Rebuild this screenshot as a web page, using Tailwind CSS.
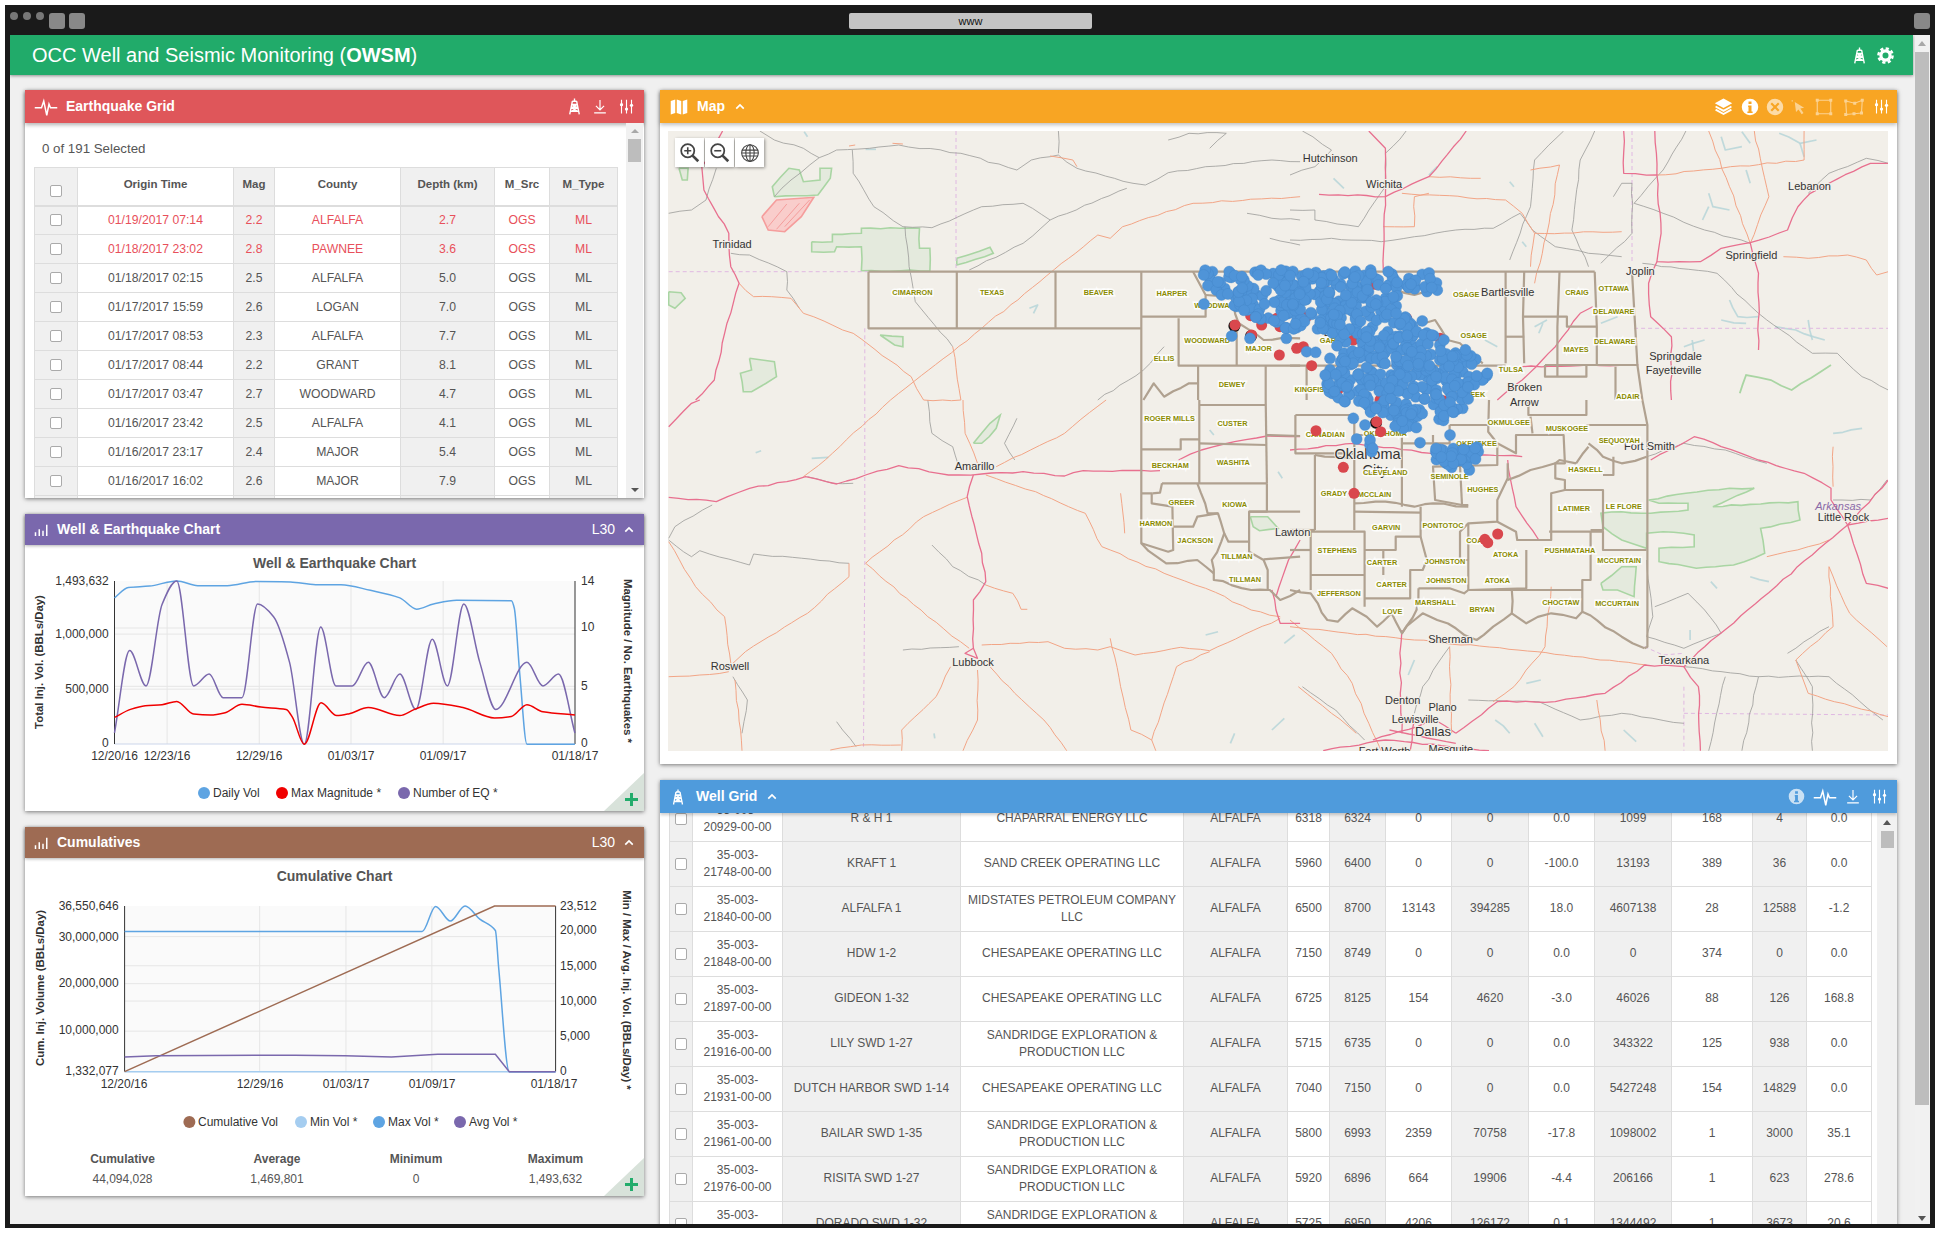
<!DOCTYPE html>
<html lang="en">
<head>
    <meta charset="UTF-8">
    <title>OCC Well and Seismic Monitoring</title>
    <script src="https://cdn.jsdelivr.net/npm/@tailwindcss/browser@4"></script>
</head>
<body class="bg-white overflow-hidden font-['Liberation_Sans',Arial,sans-serif] text-[#555]">

    <!-- icon sprite -->
    <svg class="hidden">
        <symbol id="i-rig" viewBox="0 0 24 32"><path fill="none" stroke="currentColor" stroke-width="2.600" d="M12 1v5M8 6h8M8 6 3 31M16 6l5 25M7 12h10M6 18h12M4 25h16M7 12l10 6M17 12 7 18M6 18l12 7M18 18 6 25"/></symbol>
        <symbol id="i-down" viewBox="0 0 24 24"><path fill="none" stroke="currentColor" stroke-width="2" d="M12 1v16M5 11l7 7 7-7M2 23h20"/></symbol>
        <symbol id="i-sliders" viewBox="0 0 24 24"><path fill="none" stroke="currentColor" stroke-width="1.800" d="M4 1v22M12 1v22M20 1v22"/><circle cx="4" cy="9" r="2.600" fill="currentColor"/><circle cx="12" cy="16" r="2.600" fill="currentColor"/><circle cx="20" cy="10" r="2.600" fill="currentColor"/></symbol>
        <symbol id="i-pulse" viewBox="0 0 32 24"><polyline fill="none" stroke="currentColor" stroke-width="2" points="1,13 10,13 13,4 17,23 20,8 22,13 31,13"/></symbol>
        <symbol id="i-bars" viewBox="0 0 20 16"><path fill="currentColor" d="M1 11h2v5H1zM6 7h2v9H6zM11 9h2v7h-2zM16 1h2v15h-2z"/></symbol>
        <symbol id="i-map" viewBox="0 0 24 24"><path fill="currentColor" d="M1 4l6-2v18l-6 2zM9 2l6 2v18l-6-2zM17 4l6-2v18l-6 2z"/></symbol>
        <symbol id="i-layers" viewBox="0 0 24 24"><path fill="currentColor" d="M12 2l11 6-11 6L1 8z"/><path fill="none" stroke="currentColor" stroke-width="2.400" d="M2 12l10 5.500L22 12M2 16l10 5.500L22 16"/></symbol>
        <symbol id="i-info" viewBox="0 0 24 24"><path fill="currentColor" fill-rule="evenodd" d="M12 1a11 11 0 1 0 0 22a11 11 0 1 0 0-22zM10 4.500h4v3.500h-4zM9.500 10h4.500v8h1.500v2h-7v-2h1.500v-6h-.5z"/></symbol>
        <symbol id="i-x" viewBox="0 0 24 24"><path fill="currentColor" fill-rule="evenodd" d="M12 1a11 11 0 1 0 0 22a11 11 0 1 0 0-22zM8 6l4 4 4-4 2 2-4 4 4 4-2 2-4-4-4 4-2-2 4-4-4-4z"/></symbol>
        <symbol id="i-cursor" viewBox="0 0 24 24"><path fill="currentColor" d="M6 4l15 9-6 1.500 5 7-3 2-5-7.500-4 4z"/><path fill="currentColor" d="M1 1h2v2H1z"/></symbol>
        <symbol id="i-rect" viewBox="0 0 24 24"><path fill="none" stroke="currentColor" stroke-width="1.500" d="M3 3h18v18H3z"/><path fill="currentColor" d="M1 1h4v4H1zM19 1h4v4h-4zM1 19h4v4H1zM19 19h4v4h-4z"/></symbol>
        <symbol id="i-poly" viewBox="0 0 28 24"><path fill="none" stroke="currentColor" stroke-width="1.500" d="M3 4l12 3 10-4-1 17-10 1-10 1z"/><path fill="currentColor" d="M1 2h4v4H1zM13 5h4v4h-4zM23 1h4v4h-4zM22 18h4v4h-4zM12 19h4v4h-4zM1 20h4v4H1z"/></symbol>
        <symbol id="i-gear" viewBox="0 0 24 24"><circle cx="12" cy="12" r="6.500" fill="none" stroke="currentColor" stroke-width="4.500"/><circle cx="12" cy="12" r="10" fill="none" stroke="currentColor" stroke-width="3.500" stroke-dasharray="4.500 3.350"/></symbol>
        <symbol id="i-up" viewBox="0 0 12 8"><path fill="none" stroke="currentColor" stroke-width="2" d="M1.500 6.500 6 2l4.500 4.500"/></symbol>
        <symbol id="i-zoomin" viewBox="0 0 24 24"><circle cx="10" cy="10" r="7.500" fill="none" stroke="currentColor" stroke-width="2"/><path fill="none" stroke="currentColor" stroke-width="3" d="M15.500 15.500 22 22"/><path fill="none" stroke="currentColor" stroke-width="1.800" d="M6 10h8M10 6v8"/></symbol>
        <symbol id="i-zoomout" viewBox="0 0 24 24"><circle cx="10" cy="10" r="7.500" fill="none" stroke="currentColor" stroke-width="2"/><path fill="none" stroke="currentColor" stroke-width="3" d="M15.500 15.500 22 22"/><path fill="none" stroke="currentColor" stroke-width="1.800" d="M6 10h8"/></symbol>
        <symbol id="i-globe" viewBox="0 0 24 24"><g fill="none" stroke="currentColor" stroke-width="1.300"><circle cx="12" cy="12" r="10"/><ellipse cx="12" cy="12" rx="5" ry="10"/><path d="M12 2v20M2.500 8.500h19M2 12h20M2.500 15.500h19"/></g></symbol>
        <symbol id="i-plus" viewBox="0 0 14 14"><path fill="none" stroke="currentColor" stroke-width="3.200" d="M7 0v14M0 7h14"/></symbol>
    </svg>

    <div class="w-[1940px] h-[1234px] pt-[5px] pl-[5px]">
        <div class="w-[1930px] h-[1223px] bg-[#1a1a1a] flex flex-col">

            <!-- browser chrome -->
            <div class="h-[30px] flex items-start pl-[5px] shrink-0">
                <div class="flex gap-[5px] mt-[7px]">
                    <span class="w-[8px] h-[8px] rounded-full bg-[#777]"></span>
                    <span class="w-[8px] h-[8px] rounded-full bg-[#777]"></span>
                    <span class="w-[8px] h-[8px] rounded-full bg-[#777]"></span>
                </div>
                <span class="w-[16px] h-[16px] rounded-[3px] bg-[#888] ml-[5px] mt-[8px]"></span>
                <span class="w-[16px] h-[16px] rounded-[3px] bg-[#888] ml-[4px] mt-[8px]"></span>
                <div class="w-[243px] h-[16px] rounded-[2px] bg-[#c4c4c4] ml-[764px] mt-[8px] text-center text-[#111] text-[11px] leading-[16px]">www</div>
                <span class="w-[16px] h-[16px] rounded-[3px] bg-[#888] ml-[822px] mt-[8px]"></span>
            </div>

            <!-- page -->
            <div class="mx-[5px] h-[1189px] flex bg-[#f0f0f0] overflow-hidden">
                <div class="w-[1905px]">
                    <div class="w-[1903px] h-[40px] bg-[#21ab6a] shadow-[0_1px_3px_rgba(0,0,0,0.4)] flex items-center pl-[22px] pr-[19px] text-white">
                        <h1 class="text-[20px] flex-1">OCC Well and Seismic Monitoring (<b>OWSM</b>)</h1>
                        <svg class="w-[13px] h-[17px] mr-[11px]"><use href="#i-rig"/></svg>
                        <svg class="w-[17px] h-[17px]"><use href="#i-gear"/></svg>
                    </div>

                    <div class="flex gap-[16px] pl-[15px] pt-[15px]">
                        <!-- left column -->
                        <div class="w-[619px] flex flex-col gap-[16px]">
                            <section class="h-[408px] bg-white shadow-[0_1px_4px_rgba(0,0,0,0.5)] flex flex-col">
                                <div class="h-[33px] shrink-0 bg-[#df565a] text-white flex items-center pl-[9px] pr-[10px] shadow-[0_2px_4px_rgba(0,0,0,0.3)] relative">
                                    <svg class="w-[24px] h-[18px] mr-[8px]"><use href="#i-pulse"/></svg>
                                    <span class="font-bold text-[14px] flex-1">Earthquake Grid</span>
                                    <svg class="w-[13px] h-[17px] mr-[12px]"><use href="#i-rig"/></svg>
                                    <svg class="w-[14px] h-[15px] mr-[12px]"><use href="#i-down"/></svg>
                                    <svg class="w-[15px] h-[15px]"><use href="#i-sliders"/></svg>
                                </div>
                                <div class="flex flex-1 overflow-hidden">
                                    <div class="w-[601px] pl-[9px] overflow-hidden">
                                        <div class="h-[44px] pt-[17px] pl-[8px] text-[13.300px] leading-[18px]">0 of 191 Selected</div>
                                        <table class="w-[583px] table-fixed border-collapse text-[12.200px] text-center">
                                            <colgroup><col class="w-[43px]"><col class="w-[156px]"><col class="w-[41px]"><col class="w-[126px]"><col class="w-[94px]"><col class="w-[55px]"><col class="w-[68px]"></colgroup>
                                            <thead>
                                                <tr class="h-[38px] text-[11.500px] [&>th]:border [&>th]:border-[#ddd] [&>th]:border-b-2 [&>th:nth-child(odd)]:bg-[#f0f0f0] [&>th]:pb-[4px]">
                                                    <th><div class="w-[12px] h-[12px] mx-auto mt-[14px] bg-white border border-[#aaa] rounded-[2px]"></div></th>
                                                    <th>Origin Time</th><th>Mag</th><th>County</th><th>Depth (km)</th><th>M_Src</th><th>M_Type</th>
                                                </tr>
                                            </thead>
                                            <tbody id="eq-rows"></tbody>
                                        </table>
                                    </div>
                                    <div class="w-[17px] bg-[#f1f1f1] flex flex-col items-center relative">
                                        <span class="mt-[6px] w-0 h-0 border-x-[4px] border-x-transparent border-b-[4px] border-b-[#a8a8a8]"></span>
                                        <span class="mt-[6px] w-[13px] h-[23px] bg-[#bdbdbd]"></span>
                                        <span class="mt-auto mb-[6px] w-0 h-0 border-x-[4px] border-x-transparent border-t-[4px] border-t-[#555]"></span>
                                    </div>
                                </div>
                            </section>

                            <section class="h-[297px] bg-white shadow-[0_1px_4px_rgba(0,0,0,0.5)] relative">
                                <div class="h-[31px] bg-[#7a68ad] text-white flex items-center pl-[9px] pr-[10px] shadow-[0_1px_3px_rgba(0,0,0,0.3)] relative">
                                    <svg class="w-[15px] h-[12px] mr-[8px]"><use href="#i-bars"/></svg>
                                    <span class="font-bold text-[14px] flex-1">Well &amp; Earthquake Chart</span>
                                    <span class="text-[14px] mr-[9px]">L30</span>
                                    <svg class="w-[10px] h-[7px]"><use href="#i-up"/></svg>
                                </div>
                                <svg id="chart1" viewBox="25 545 619 266" class="w-[619px] h-[266px] block"></svg>
                                <div class="absolute right-0 bottom-0 w-[40px] h-[38px] bg-[#d8e2da] [clip-path:polygon(100%_0,100%_100%,0_100%)]"></div>
                                <svg class="absolute right-[6px] bottom-[5px] w-[13px] h-[13px] text-[#22ac6b]"><use href="#i-plus"/></svg>
                            </section>

                            <section class="h-[369px] bg-white shadow-[0_1px_4px_rgba(0,0,0,0.5)] relative">
                                <div class="h-[31px] bg-[#9e6b53] text-white flex items-center pl-[9px] pr-[10px] shadow-[0_1px_3px_rgba(0,0,0,0.3)] relative">
                                    <svg class="w-[15px] h-[12px] mr-[8px]"><use href="#i-bars"/></svg>
                                    <span class="font-bold text-[14px] flex-1">Cumulatives</span>
                                    <span class="text-[14px] mr-[9px]">L30</span>
                                    <svg class="w-[10px] h-[7px]"><use href="#i-up"/></svg>
                                </div>
                                <svg id="chart2" viewBox="25 860 619 291" class="w-[619px] h-[291px] block"></svg>
                                <div class="grid grid-cols-[195px_114px_164px_115px] text-center text-[12px] leading-[20px]">
                                    <b>Cumulative</b><b>Average</b><b>Minimum</b><b>Maximum</b>
                                    <span>44,094,028</span><span>1,469,801</span><span>0</span><span>1,493,632</span>
                                </div>
                                <div class="absolute right-0 bottom-0 w-[40px] h-[38px] bg-[#d8e2da] [clip-path:polygon(100%_0,100%_100%,0_100%)]"></div>
                                <svg class="absolute right-[6px] bottom-[5px] w-[13px] h-[13px] text-[#22ac6b]"><use href="#i-plus"/></svg>
                            </section>
                        </div>

                        <!-- right column -->
                        <div class="w-[1237px] flex flex-col gap-[16px]">
                            <section class="h-[674px] bg-white shadow-[0_1px_4px_rgba(0,0,0,0.5)]">
                                <div class="h-[33px] bg-[#f8a523] text-white flex items-center pl-[10px] pr-[8px] shadow-[0_2px_4px_rgba(0,0,0,0.25)] relative">
                                    <svg class="w-[18px] h-[18px] mr-[9px]"><use href="#i-map"/></svg>
                                    <span class="font-bold text-[14px] mr-[10px]">Map</span>
                                    <svg class="w-[10px] h-[7px] flex-none"><use href="#i-up"/></svg>
                                    <span class="flex-1"></span>
                                    <svg class="w-[19px] h-[19px] mr-[8px]"><use href="#i-layers"/></svg>
                                    <svg class="w-[18px] h-[18px] mr-[7px]"><use href="#i-info"/></svg>
                                    <svg class="w-[18px] h-[18px] mr-[7px] opacity-60"><use href="#i-x"/></svg>
                                    <svg class="w-[15px] h-[16px] mr-[8px] opacity-50"><use href="#i-cursor"/></svg>
                                    <svg class="w-[20px] h-[18px] mr-[9px] opacity-50"><use href="#i-rect"/></svg>
                                    <svg class="w-[22px] h-[18px] mr-[9px] opacity-50"><use href="#i-poly"/></svg>
                                    <svg class="w-[15px] h-[17px]"><use href="#i-sliders"/></svg>
                                </div>
                                <div class="relative w-[1220px] h-[620px] ml-[8px] mt-[8px] bg-[#f2efe9] overflow-hidden">
                                    <svg id="map" viewBox="668 131 1220 620" class="w-[1220px] h-[620px] block"></svg>
                                    <div class="absolute left-[7px] top-[7px] flex gap-px">
                                        <div class="w-[29px] h-[29px] bg-white shadow-[1px_1px_3px_rgba(0,0,0,0.4)] flex items-center justify-center text-[#444]"><svg class="w-[21px] h-[21px]"><use href="#i-zoomin"/></svg></div>
                                        <div class="w-[29px] h-[29px] bg-white shadow-[1px_1px_3px_rgba(0,0,0,0.4)] flex items-center justify-center text-[#444]"><svg class="w-[21px] h-[21px]"><use href="#i-zoomout"/></svg></div>
                                        <div class="w-[29px] h-[29px] bg-white shadow-[1px_1px_3px_rgba(0,0,0,0.4)] flex items-center justify-center text-[#444]"><svg class="w-[20px] h-[20px]"><use href="#i-globe"/></svg></div>
                                    </div>
                                </div>
                            </section>

                            <section class="h-[448px] bg-white shadow-[0_1px_4px_rgba(0,0,0,0.5)] flex flex-col overflow-hidden">
                                <div class="h-[33px] shrink-0 bg-[#4f9bdc] text-white flex items-center pl-[12px] pr-[10px] shadow-[0_2px_3px_rgba(0,0,0,0.2)] relative z-10">
                                    <svg class="w-[12px] h-[18px] mr-[12px]"><use href="#i-rig"/></svg>
                                    <span class="font-bold text-[14px] mr-[10px]">Well Grid</span>
                                    <svg class="w-[10px] h-[7px]"><use href="#i-up"/></svg>
                                    <span class="flex-1"></span>
                                    <svg class="w-[17px] h-[17px] mr-[8px] opacity-70"><use href="#i-info"/></svg>
                                    <svg class="w-[24px] h-[18px] mr-[9px]"><use href="#i-pulse"/></svg>
                                    <svg class="w-[14px] h-[15px] mr-[12px]"><use href="#i-down"/></svg>
                                    <svg class="w-[15px] h-[15px]"><use href="#i-sliders"/></svg>
                                </div>
                                <div class="flex flex-1 overflow-hidden">
                                    <div class="w-[1217px] pl-[9px] overflow-hidden">
                                        <table class="w-[1202px] -mt-[17.500px] table-fixed border-collapse text-[12px] leading-[17px] text-center">
                                            <colgroup><col class="w-[23px]"><col class="w-[90px]"><col class="w-[178px]"><col class="w-[223px]"><col class="w-[104px]"><col class="w-[42px]"><col class="w-[56px]"><col class="w-[66px]"><col class="w-[77px]"><col class="w-[66px]"><col class="w-[77px]"><col class="w-[81px]"><col class="w-[54px]"><col class="w-[65px]"></colgroup>
                                            <tbody id="well-rows"></tbody>
                                        </table>
                                    </div>
                                    <div class="w-[20px] bg-[#f1f1f1] flex flex-col items-center">
                                        <span class="mt-[7px] w-0 h-0 border-x-[4px] border-x-transparent border-b-[5px] border-b-[#555]"></span>
                                        <span class="mt-[6px] w-[13px] h-[17px] bg-[#bdbdbd]"></span>
                                    </div>
                                </div>
                            </section>
                        </div>
                    </div>
                </div>

                <!-- page scrollbar -->
                <div class="w-[15px] bg-[#f1f1f1] flex flex-col items-start">
                    <span class="mt-[6px] ml-[3px] w-0 h-0 border-x-[4px] border-x-transparent border-b-[5px] border-b-[#a8a8a8]"></span>
                    <span class="mt-[6px] w-[14px] h-[1053px] bg-[#bdbdbd]"></span>
                    <span class="mt-auto mb-[3px] ml-[3px] w-0 h-0 border-x-[4px] border-x-transparent border-t-[5px] border-t-[#555]"></span>
                </div>
            </div>
        </div>
    </div>

    <script>
        // --- grids ---
        const box = '<div class="w-[12px] h-[12px] mx-auto bg-white border border-[#aaa] rounded-[2px]"></div>';

        const eq = [
            ['01/19/2017 07:14','2.2','ALFALFA','2.7',1],
            ['01/18/2017 23:02','2.8','PAWNEE','3.6',1],
            ['01/18/2017 02:15','2.5','ALFALFA','5.0'],
            ['01/17/2017 15:59','2.6','LOGAN','7.0'],
            ['01/17/2017 08:53','2.3','ALFALFA','7.7'],
            ['01/17/2017 08:44','2.2','GRANT','8.1'],
            ['01/17/2017 03:47','2.7','WOODWARD','4.7'],
            ['01/16/2017 23:42','2.5','ALFALFA','4.1'],
            ['01/16/2017 23:17','2.4','MAJOR','5.4'],
            ['01/16/2017 16:02','2.6','MAJOR','7.9'],
            ['','','','']
        ];
        document.getElementById('eq-rows').innerHTML = eq.map(r =>
            `<tr class="h-[29px] [&>td]:border [&>td]:border-[#ddd] [&>td:nth-child(odd)]:bg-[#f0f0f0] ${r[4] ? 'text-[#e8505b]' : ''}">
                <td>${r[0] ? box : ''}</td><td>${r[0]}</td><td>${r[1]}</td><td>${r[2]}</td><td>${r[3]}</td><td>${r[0] ? 'OGS' : ''}</td><td>${r[0] ? 'ML' : ''}</td></tr>`
        ).join('');

        const CHK = 'CHESAPEAKE OPERATING LLC', SND = 'SANDRIDGE EXPLORATION &amp; PRODUCTION LLC';
        const wells = [
            ['20929','R &amp; H 1','CHAPARRAL ENERGY LLC',6318,6324,0,0,'0.0',1099,168,4,'0.0'],
            ['21748','KRAFT 1','SAND CREEK OPERATING LLC',5960,6400,0,0,'-100.0',13193,389,36,'0.0'],
            ['21840','ALFALFA 1','MIDSTATES PETROLEUM COMPANY LLC',6500,8700,13143,394285,'18.0',4607138,28,12588,'-1.2'],
            ['21848','HDW 1-2',CHK,7150,8749,0,0,'0.0',0,374,0,'0.0'],
            ['21897','GIDEON 1-32',CHK,6725,8125,154,4620,'-3.0',46026,88,126,'168.8'],
            ['21916','LILY SWD 1-27',SND,5715,6735,0,0,'0.0',343322,125,938,'0.0'],
            ['21931','DUTCH HARBOR SWD 1-14',CHK,7040,7150,0,0,'0.0',5427248,154,14829,'0.0'],
            ['21961','BAILAR SWD 1-35',SND,5800,6993,2359,70758,'-17.8',1098002,1,3000,'35.1'],
            ['21976','RISITA SWD 1-27',SND,5920,6896,664,19906,'-4.4',206166,1,623,'278.6'],
            ['21983','DORADO SWD 1-32',SND,5725,6950,4206,126172,'0.1',1344492,1,3673,'20.6']
        ];
        document.getElementById('well-rows').innerHTML = wells.map(r =>
            `<tr class="h-[45px] [&>td]:border [&>td]:border-[#ddd] [&>td:nth-child(odd)]:bg-[#f0f0f0]">
                <td>${box}</td><td>35-003-<br>${r[0]}-00-00</td><td>${r[1]}</td><td class="px-[4px]">${r[2]}</td><td>ALFALFA</td>
                ${r.slice(3).map(v => `<td>${v}</td>`).join('')}</tr>`
        ).join('');

        // --- charts (points are read off the picture, sx/sy bring them to page pixels) ---
        const sx = x => x / 2.376, sy = y => 500 + y / 2.125;
        const pts = s => s.trim().split(/\s+/).map(p => p.split(',').map(Number));
        // monotone spline, so flat runs stay flat next to a steep drop
        const spline = s => {
            const p = pts(s).map(([x, y]) => [sx(x), sy(y)]);
            const slope = i => (p[i + 1][1] - p[i][1]) / (p[i + 1][0] - p[i][0]);
            const m = p.map((_, i) => {
                if (i === 0) return slope(0);
                if (i === p.length - 1) return slope(i - 1);
                const a = slope(i - 1), b = slope(i);
                return a * b <= 0 ? 0 : 2 * a * b / (a + b);
            });
            let d = `M${p[0]}`;
            for (let i = 0; i < p.length - 1; i++) {
                const h = (p[i + 1][0] - p[i][0]) / 3;
                d += `C${p[i][0] + h},${p[i][1] + m[i] * h} ${p[i + 1][0] - h},${p[i + 1][1] - m[i + 1] * h} ${p[i + 1][0]},${p[i + 1][1]}`;
            }
            return d;
        };
        const line = (d, c, w = 1.500) => `<path d="${d}" fill="none" stroke="${c}" stroke-width="${w}"/>`;
        const text = (x, y, s, anchor = 'middle', size = 12, extra = '') =>
            `<text x="${x}" y="${y + size * 0.36}" text-anchor="${anchor}" font-size="${size}" fill="#333" ${extra}>${s}</text>`;
        const rotated = (x, y, s, ang, size) =>
            `<text transform="translate(${x},${y}) rotate(${ang})" text-anchor="middle" dominant-baseline="middle" font-size="${size}" font-weight="bold" fill="#333">${s}</text>`;
        const dot = (x, y, c) => `<circle cx="${x}" cy="${y}" r="6" fill="${c}"/>`;

        function frame(l, r, t, b, hs, vs) {
            let o = `<rect x="${l}" y="${t}" width="${r - l}" height="${b - t}" fill="#fafafa"/>`;
            hs.forEach(y => o += line(`M${l} ${sy(y)}H${r}`, '#e6e6e6', 1));
            vs.forEach(x => o += line(`M${sx(x)} ${t}V${b}`, '#e6e6e6', 1));
            o += line(`M${l} ${b}H${r}`, '#ccd6eb', 1);
            o += line(`M${l} ${t}V${b}`, '#333', 1) + line(`M${r} ${t}V${b}`, '#333', 1);
            return o;
        }

        // Well & Earthquake
        {
            const l = 114.500, r = 575, t = 581, b = 744;
            let o = frame(l, r, t, b, [272, 285, 396, 402], [397, 616, 834, 1053]);
            o += text(334.600, 563, 'Well &amp; Earthquake Chart', 'middle', 14, 'font-weight="bold" style="fill:#555"');
            [['1,493,632', 581], ['1,000,000', 634], ['500,000', 689], ['0', 743]].forEach(a => o += text(108.600, a[1], a[0], 'end'));
            [['14', 581], ['10', 627], ['5', 685.400], ['0', 743]].forEach(a => o += text(581, a[1], a[0], 'start'));
            [['12/20/16', 114.500], ['12/23/16', 167], ['12/29/16', 259], ['01/03/17', 351], ['01/09/17', 443], ['01/18/17', 575]].forEach(a => o += text(a[1], 756, a[0]));
            o += rotated(40, 662, 'Total Inj. Vol. (BBLs/Day)', -90, 11.400);
            o += rotated(627, 661, 'Magnitude / No. Earthquakes *', 90, 11.400);
            o += line(spline('272,208 305,186 355,183 420,172 470,182 540,182 610,173 690,174 750,180 810,180 880,192 950,208 990,232 1030,221 1085,213 1215,214 1222,230 1235,370 1252,519 1366,519'), '#5ea4e2');
            o += line(spline('272,495 308,320 347,395 385,222 420,172 460,395 497,370 530,420 575,420 612,221 650,248 688,345 723,519 762,270 798,395 837,395 875,345 913,420 950,370 988,445 1027,296 1063,395 1102,221 1140,345 1178,445 1252,345 1290,395 1327,370 1366,495'), '#7a68ad');
            o += line(spline('272,462 310,445 345,437 385,435 420,428 460,455 500,457 535,452 575,434 620,440 680,445 695,462 723,519 763,431 800,458 830,454 875,441 950,458 985,445 1030,432 1100,441 1175,463 1215,460 1252,435 1290,450 1366,457'), '#f00000');
            o += dot(204, 793, '#5ea4e2') + text(213, 793, 'Daily Vol', 'start');
            o += dot(282, 793, '#f00000') + text(291, 793, 'Max Magnitude *', 'start');
            o += dot(404, 793, '#7a68ad') + text(413, 793, 'Number of EQ *', 'start');
            document.getElementById('chart1').innerHTML = o;
        }

        // Cumulatives
        {
            const l = 124.600, r = 555.600, t = 908, b = 1073.600;
            let o = frame(l, r, t, b, [932, 994, 1032, 1069, 1133], [617, 822, 1026]);
            o += text(334.600, 878, 'Cumulative Chart', 'middle', 14, 'font-weight="bold" style="fill:#555"');
            [['36,550,646', 908], ['30,000,000', 938.600], ['20,000,000', 984.700], ['10,000,000', 1032], ['1,332,077', 1073]].forEach(a => o += text(118.700, a[1], a[0], 'end'));
            [['23,512', 908], ['20,000', 931.500], ['15,000', 967.800], ['10,000', 1003], ['5,000', 1038], ['0', 1073]].forEach(a => o += text(560, a[1], a[0], 'start'));
            [['12/20/16', 124], ['12/29/16', 260], ['01/03/17', 346], ['01/09/17', 432], ['01/18/17', 554]].forEach(a => o += text(a[1], 1086, a[0]));
            o += rotated(41, 990, 'Cum. Inj. Volume (BBLs/Day)', -90, 11.400);
            o += rotated(626, 992, 'Min / Max / Avg. Inj. Vol. (BBLs/Day) *', 90, 11.400);
            const straight = s => 'M' + pts(s).map(([x, y]) => `${sx(x)} ${sy(y)}`).join('L');
            o += line(straight('296,1219 1320,1219'), '#a5cdf0');
            o += line(spline('296,921 1003,921 1035,868 1070,899 1105,867 1140,895 1177,919 1185,1000 1210,1219 1320,1219'), '#5ea4e2');
            o += line(straight('296,1219 1175,867 1320,867'), '#9e6b53');
            o += line(straight('296,1188 370,1185 700,1184 820,1185 930,1188 1040,1182 1177,1182 1210,1219 1320,1219'), '#7a68ad');
            o += dot(189.400, 1124, '#9e6b53') + text(198, 1124, 'Cumulative Vol', 'start');
            o += dot(301, 1124, '#a5cdf0') + text(310, 1124, 'Min Vol *', 'start');
            o += dot(379, 1124, '#5ea4e2') + text(388, 1124, 'Max Vol *', 'start');
            o += dot(460, 1124, '#7a68ad') + text(469, 1124, 'Avg Vol *', 'start');
            document.getElementById('chart2').innerHTML = o;
        }

        // --- map (each stroke is traced in one of four picture quadrants) ---
        const Q = { A: [650, 0], B: [1290, 0], C: [650, 400], D: [1290, 400] };
        const P = (q, x, y) => [Q[q][0] + x / 2.412, Q[q][1] + y / 3];
        const PINK = '#e8708f', ORG = '#f2a586', GRAY = '#9a9a98', COUNTY = '#b0a190', PARK = '#a9d5a3', LAKE = '#b6d5d8';

        let seed = 20170119;
        const rnd = () => (seed = (seed * 1664525 + 1013904223) % 4294967296) / 4294967296;

        // roads and rivers are not straight: break each leg up and nudge the pieces
        const pl = (q, s, amp = 0, step = 9) => {
            const p = pts(s).map(([x, y]) => P(q, x, y));
            const out = [];
            p.forEach((a, i) => {
                out.push(a);
                const b = p[i + 1];
                if (!b || !amp) return;
                const n = Math.floor(Math.hypot(b[0] - a[0], b[1] - a[1]) / step);
                for (let k = 1; k < n; k++) {
                    out.push([a[0] + (b[0] - a[0]) * k / n + (rnd() - .5) * amp * 2, a[1] + (b[1] - a[1]) * k / n + (rnd() - .5) * amp * 2]);
                }
            });
            return out.map(a => a.map(v => v.toFixed(1)).join(',')).join(' ');
        };

        const parks = [
            ['A', '300,590 295,560 335,505 360,510 370,545 410,540 410,505 438,505 435,535 405,585'],
            ['A', '390,725 440,725 440,703 510,700 510,685 650,685 650,745 675,745 675,812 510,812 510,740 450,740 445,755 390,755'],
            ['A', '740,775 820,742 828,760 740,795'],
            ['A', '70,505 92,505 90,540 78,540'],
            ['A', '45,875 75,878 85,895 60,925 45,915'],
            ['A', '555,1005 610,1010 610,1040 590,1035'],
            ['A', '240,1075 270,1080 300,1085 305,1130 280,1150 245,1175 225,1175 218,1120 245,1110'],
            ['C', '780,130 820,70 845,45 835,85 800,130'],
            ['C', '1448,350 1490,350 1515,385 1470,392 1455,380'],
            ['D', '865,300 955,280 1060,265 1120,265 1020,320 1225,305 1230,360 1135,385 1145,460 1070,495 980,505 890,485 890,445 975,440 975,405 900,395 860,400 860,445 800,420 755,380 750,340 800,335 870,340 960,330 960,310 890,310'],
            ['D', '750,550 800,500 835,500 830,590 790,570 755,570']
        ];
        const lakes = [
            ['A', '915,925 935,915 925,940'], ['A', '520,448 545,448'], ['A', '372,395 380,410'],
            ['B', '105,535 130,565'], ['B', '335,525 355,500'], ['B', '560,725 570,740'], ['B', '530,545 540,560'],
            ['B', '1010,580 1020,620 1060,630'], ['B', '1010,620 995,660'], ['B', '1040,410 1050,450 1090,440'], ['B', '1090,395 1110,430'],
            ['B', '1180,400 1230,430 1270,420'], ['B', '1230,430 1240,470'], ['B', '1100,510 1110,550'],
            ['B', '1060,900 1080,950 1130,950'], ['B', '1040,960 1100,970'], ['B', '1170,980 1220,990 1290,1020'], ['B', '1250,960 1260,1020'], ['B', '950,1040 1000,1020'], ['B', '970,1020 975,1070'],
            ['B', '590,980 620,960'], ['B', '600,1000 610,970'], ['B', '750,970 790,950'], ['B', '470,1020 500,1040'],
            ['C', '1340,705 1370,695'], ['C', '1530,730 1555,705'], ['C', '1400,1030 1410,1000'], ['C', '1500,990 1530,955'], ['C', '685,1000 687,1015'], ['C', '255,158 268,152'], ['C', '390,175 430,172'], ['C', '1350,90 1360,105'], ['C', '1515,215 1525,235'],
            ['D', '1030,410 1080,425 1130,405'], ['D', '1310,100 1380,85'], ['D', '570,850 605,840'], ['D', '965,690 965,720'], ['D', '495,960 530,1000'], ['D', '590,970 610,1010'], ['D', '285,825 300,780'], ['D', '805,990 835,1025'], ['D', '1015,545 1030,565'], ['D', '1110,530 1155,545']
        ];
        const roads = [
            // gray: minor roads and rail
            [GRAY, .8, 'A', '265,393 300,420 370,445 408,473 450,450 530,445 600,435 750,460 885,510 920,480 985,465 1030,505 1165,550 1195,555 1250,518 1340,500 1500,480 1568,485'],
            [GRAY, .8, 'A', '408,473 340,540 300,590'],
            [GRAY, .8, 'A', '488,450 490,520 540,620 610,680 680,683 800,620 900,610 965,660 1150,565'],
            [GRAY, .8, 'A', '965,660 900,730 770,810'],
            [GRAY, .8, 'A', '615,680 625,800 640,905 730,1040'],
            [GRAY, .8, 'A', '985,393 985,460'],
            [GRAY, .8, 'A', '45,640 100,630 135,600 160,505'],
            [GRAY, .8, 'A', '195,760 240,765 330,815 330,870 360,925'],
            [GRAY, .8, 'A', '1250,420 1300,400 1390,400 1350,445'],
            [GRAY, .8, 'A', '1440,640 1500,655 1568,660'],
            [GRAY, .8, 'A', '1495,715 1568,735'],
            [GRAY, .8, 'A', '1080,1200 1190,1110 1240,1040'],
            [GRAY, .8, 'B', '30,393 100,450 60,500 0,525'],
            [GRAY, .8, 'B', '280,393 230,460 230,560 165,680 60,660 60,630 0,630'],
            [GRAY, .8, 'B', '0,720 100,715 220,725 300,710 400,690 490,685 555,640 585,690 640,740 720,760 800,770'],
            [GRAY, .8, 'B', '660,393 590,480 580,620 530,780'],
            [GRAY, .8, 'B', '735,393 700,480 680,690 720,800'],
            [GRAY, .8, 'B', '955,393 900,510 830,610 900,640 1000,690 1110,730'],
            [GRAY, .8, 'B', '780,590 800,550 825,550 825,700 750,790'],
            [GRAY, .8, 'B', '850,790 1030,820 1130,940 1260,1060 1320,1060 1380,1130 1443,1170'],
            [GRAY, .8, 'B', '1250,580 1300,520 1390,475 1443,490'],
            [GRAY, .8, 'C', '45,420 100,470 120,452 240,495 250,462 480,490'],
            [GRAY, .8, 'C', '45,415 60,380 150,315'],
            [GRAY, .8, 'C', '670,0 680,100 730,140 745,200'],
            [GRAY, .8, 'C', '885,55 855,130 880,180'],
            [GRAY, .8, 'C', '680,435 730,500 810,555'],
            [GRAY, .8, 'C', '745,740 610,750'],
            [GRAY, .8, 'C', '200,830 235,900 222,1000'],
            [GRAY, .8, 'C', '450,965 497,1040'],
            [GRAY, .8, 'C', '380,230 440,250 490,250'],
            [GRAY, .8, 'D', '860,480 875,650 860,710 950,745 1040,700 1000,630 960,580 880,620'],
            [GRAY, .8, 'D', '950,800 1130,830 1300,830 1430,960'],
            [GRAY, .8, 'D', '1130,830 1090,1052'],
            [GRAY, .8, 'D', '1050,830 1010,1052'],
            [GRAY, .8, 'D', '1220,780 1260,860 1260,1052'],
            [GRAY, .8, 'D', '1300,680 1200,760'],
            [GRAY, .8, 'D', '30,860 110,930 180,1020'],
            [GRAY, .8, 'D', '385,740 320,860 300,940'],
            [GRAY, .8, 'D', '430,900 600,905 700,960 800,940 950,970'],
            [GRAY, .8, 'D', '860,170 950,130 1050,150 1150,190'],
            [GRAY, .8, 'D', '1310,300 1400,300 1440,240'],
            // orange: primary roads
            [ORG, 1, 'A', '215,850 250,890 340,895 370,940 490,1000 630,1130 660,1200 750,1200 730,1040'],
            [ORG, 1, 'A', '1568,590 1310,610 1140,680 1110,715 1080,705 1010,775 800,985 580,1200'],
            [ORG, 1, 'A', '480,438 495,435'], [ORG, 1, 'A', '585,430 610,432'], [ORG, 1, 'A', '965,468 1020,480 1030,500'],
            [ORG, 1, 'B', '335,530 460,535'], [ORG, 1, 'B', '335,580 300,590 300,680 225,680'],
            [ORG, 1, 'B', '270,580 520,600 560,640 590,700 800,695'], [ORG, 1, 'B', '885,525 1040,505 1240,480 1240,390'],
            [ORG, 1, 'B', '1010,393 1060,560 1110,730'], [ORG, 1, 'B', '1120,393 1155,590 1110,730'],
            [ORG, 1, 'B', '1190,770 1250,775 1345,765 1390,780 1415,825 1443,815'], [ORG, 1, 'B', '590,700 580,800'],
            [ORG, 1, 'B', '580,510 650,495 620,700 590,850'],
            [ORG, 1, 'C', '520,490 660,350 765,292'], [ORG, 1, 'C', '520,490 670,650 770,745'],
            [ORG, 1, 'C', '480,490 480,530 380,640 230,755 200,790'], [ORG, 1, 'C', '45,425 110,560 180,650 195,790'],
            [ORG, 1, 'C', '45,830 120,825 190,815'], [ORG, 1, 'C', '205,840 222,1052'],
            [ORG, 1, 'C', '810,225 930,275 1050,340 1090,440 1240,520 1340,565 1450,630 1520,650'],
            [ORG, 1, 'C', '810,555 875,580 895,628 910,628'],
            [ORG, 1, 'C', '800,735 960,725 1000,745 1080,750 1110,740 1170,765 1280,742 1350,752 1520,655'],
            [ORG, 1, 'C', '1110,715 1135,860 1160,990 1210,1020 1270,800 1350,755'], [ORG, 1, 'C', '1210,1020 1220,1052'],
            [ORG, 1, 'C', '725,800 690,890 607,990 607,1052'], [ORG, 1, 'C', '790,810 790,960 755,1052'],
            [ORG, 1, 'C', '820,800 880,880 950,960 1005,1052'], [ORG, 1, 'C', '435,1050 510,1035 605,1035'],
            [ORG, 1, 'C', '1135,280 1145,400'], [ORG, 1, 'C', '835,200 1000,100 1100,0'], [ORG, 1, 'C', '755,0 760,100 790,190'],
            [ORG, 1, 'C', '580,0 440,160 370,230'],
            [ORG, 1, 'D', '0,660 100,760 150,850 190,970 220,1052'], [ORG, 1, 'D', '0,680 300,720 550,750 860,795'],
            [ORG, 1, 'D', '630,560 615,740 540,860 490,905'], [ORG, 1, 'D', '385,740 390,1000'], [ORG, 1, 'D', '1310,140 1310,260'],
            [ORG, 1, 'D', '1440,740 1350,640 1300,500 1310,680 1220,780 1250,880 1443,950'],
            [ORG, 1, 'D', '1150,470 1250,440 1300,420'], [ORG, 1, 'D', '740,900 760,1052'], [ORG, 1, 'D', '20,860 100,940 160,1000'],
            // pink: motorways
            [PINK, 1.300, 'A', '175,393 125,500 130,570 190,700 195,800 215,850 180,1000 155,1140 110,1200'],
            [PINK, 1.300, 'B', '190,393 230,445 230,590 225,810'],
            [PINK, 1.300, 'B', '425,393 335,530 230,590 70,583'],
            [PINK, 1.300, 'B', '805,393 805,520 885,525 895,700 885,785 990,785 1040,745 1110,728 1200,690 1225,620 1255,580 1300,550 1400,490 1443,490'],
            [PINK, 1.300, 'B', '880,393 885,525'], [PINK, 1.300, 'B', '1110,728 1130,820 1130,1050'],
            [PINK, 1.300, 'B', '885,785 865,850 870,950 920,1010 920,1200'],
            [PINK, 1.300, 'B', '500,1200 560,1140 640,1040 700,940 730,920'],
            [PINK, 1.300, 'B', '560,1100 840,1095'],
            [PINK, 1.300, 'C', '45,80 100,10 120,0'],
            [PINK, 1.300, 'C', '45,292 160,305 240,265 330,245 375,230 450,252 520,225 600,197 720,225 800,222 900,215 1000,228 1045,212 1230,212'],
            [PINK, 1.300, 'C', '780,225 765,290 800,460 810,545 780,600 780,745 760,760 790,775 780,745'],
            [PINK, 1.300, 'C', '1275,180 1330,150 1410,125 1488,108 1568,110'],
            [PINK, 1.300, 'C', '1500,570 1510,630 1520,670 1568,670'],
            [PINK, 1.300, 'C', '1510,590 1540,480 1568,420'],
            [PINK, 1.300, 'D', '870,180 975,110 1040,140 1130,180 1240,220 1305,265 1305,300 1345,375 1000,740 950,800 855,795 760,880 640,905 500,905 400,1000'],
            [PINK, 1.300, 'D', '1345,375 1443,240'], [PINK, 1.300, 'D', '1345,375 1443,355'], [PINK, 1.300, 'D', '1345,375 1390,550 1443,565'],
            [PINK, 1.300, 'D', '950,800 985,860 990,1052'], [PINK, 1.300, 'D', '270,1000 265,760 270,690'],
            [PINK, 1.300, 'D', '525,180 545,320 600,420'], [PINK, 1.300, 'D', '0,150 155,130 340,160 560,170'],
            [PINK, 1.300, 'D', '200,1020 350,960 400,1000'], [PINK, 1.300, 'D', '80,1052 230,1020 480,1052'], [PINK, 1.300, 'D', '300,960 290,1052'], [PINK, 1.300, 'D', '240,990 400,1030']
        ];
        // third item: how much the line wanders (the Red River along the south, mostly)
        const counties = [
            ['A', '527,815 1568,815'], ['A', '527,815 527,985 1185,985'], ['A', '740,815 740,985'], ['A', '978,815 978,985'],
            ['A', '1185,815 1185,1200'], ['A', '1310,815 1340,885 1340,950 1185,950'], ['A', '1275,955 1275,1097 1568,1097'],
            ['A', '1415,960 1415,1097'], ['A', '1322,1097 1322,1200'], ['A', '1485,1097 1485,1200'], ['A', '1340,885 1400,885 1420,970 1480,1020 1568,1015', 1],
            ['A', '1190,1200 1215,1150 1240,1190 1300,1150 1322,1150', 1],
            ['C', '1185,0 1185,430 1250,455 1262,450 1260,320 1210,310 1210,280 1185,280'],
            ['C', '1185,148 1280,148 1280,118 1325,118'], ['C', '1325,0 1325,250'], ['C', '1325,15 1485,15'], ['C', '1485,0 1488,250'],
            ['C', '1325,130 1488,135'], ['C', '1235,250 1488,250'], ['C', '1235,250 1230,278 1212,280'], ['C', '1488,105 1568,108'],
            ['C', '1488,250 1488,335 1445,335 1445,455 1480,480 1490,510 1490,570'],
            ['C', '1320,250 1345,340 1370,340 1385,400 1355,480 1360,540 1450,570 1495,570 1520,600 1568,570', 1.300],
            ['C', '1185,430 1245,490 1320,480 1360,520', 1.300], ['C', '1262,380 1310,380 1320,350 1370,340'],
            ['C', '1385,400 1395,425 1445,425'], ['C', '1445,335 1568,335'], ['C', '1480,478 1568,470'],
            ['B', '0,815 735,815'], ['B', '200,815 200,850 300,885 345,870', 1], ['B', '520,815 520,1090'], ['B', '565,815 562,950 565,1090'], ['B', '650,815 645,980 645,1130'],
            ['B', '735,815 740,980 740,1095'], ['B', '825,815 838,1095 850,1200'], ['B', '562,950 668,950 668,980 740,980'],
            ['B', '520,1010 565,1010'], ['B', '40,1097 40,1200'], ['B', '615,1095 838,1095'], ['B', '0,1097 520,1097'],
            ['B', '615,1095 615,1130 715,1130 715,1095'], ['B', '785,1100 785,1200'], ['B', '310,975 350,960 380,1020 410,1030 450,1075 465,1090', 1],
            ['D', '480,0 478,95 500,130 545,160 545,105 660,105 663,190 640,190 640,235 663,240 663,270 755,270 755,390 725,390'],
            ['D', '575,0 575,45 715,45 715,0'], ['D', '715,75 860,75'], ['D', '850,0 862,75 862,740 855,745'], ['D', '580,50 585,100'],
            ['D', '720,130 755,170 800,190 860,170', 1.300], ['D', '640,190 650,180 690,190 720,140', 1.300], ['D', '755,225 780,225 780,170'],
            ['D', '13,45 155,45 155,160 13,160 13,45'], ['D', '155,105 270,105'], ['D', '270,105 270,130 345,130 345,105'], ['D', '385,75 480,75'], ['D', '385,75 385,130 345,130'],
            ['D', '500,130 500,195 345,200 350,300 415,315 430,315'], ['D', '60,165 60,390'], ['D', '155,160 155,390'], ['D', '270,130 270,320'], ['D', '410,195 415,320'],
            ['D', '525,190 525,235 500,300 500,365 430,370 410,395 410,480 430,480'], ['D', '525,240 580,210 640,190', 1],
            ['D', '500,365 545,395 548,420 630,420 630,280 663,270'], ['D', '625,395 755,395 755,450 860,450'], ['D', '570,450 570,565 430,570'],
            ['D', '725,395 725,540 705,540 705,635'], ['D', '430,370 430,570'], ['D', '50,395 180,395 180,620'], ['D', '50,395 50,570'], ['D', '50,525 180,525'],
            ['D', '180,450 255,450 255,410 315,410 315,320'], ['D', '315,410 330,480 320,510 290,510 290,595 180,595'], ['D', '430,570 705,570'],
            ['D', '535,570 535,640 570,670 630,640 690,655 705,635 800,710 855,745', 1.500], ['D', '310,565 385,565 420,580 430,570'], ['D', '310,565 305,630 270,700', 1],
            ['D', '0,570 50,580 90,660 115,665 150,625 185,650 210,680 245,640 270,700 300,660 320,640 355,660 400,685 450,720 490,680 535,640', 1.500],
            ['D', '155,335 315,338'], ['D', '225,450 225,525'], ['D', '60,390 0,390'], ['D', '155,310 230,305 300,320 345,310 430,320', 1], ['D', '0,450 50,450'], ['D', '60,165 155,175', 1]
        ];
        const names = {
            A: [['CIMARRON',633,877],['TEXAS',825,877],['BEAVER',1082,877],['HARPER',1259,880],['WOODWARD',1368,917],['WOODWARD',1344,1021],['ELLIS',1240,1075],['MAJOR',1468,1045],['DEWEY',1404,1153]],
            B: [['OSAGE',425,882],['CRAIG',692,878],['OTTAWA',781,866],['DELAWARE',781,933],['OSAGE',443,1005],['DELAWARE',783,1023],['MAYES',690,1048],['TULSA',533,1108],['ADAIR',815,1188],['GARFIELD',117,1021],['KINGFISHER',65,1168],['CREEK',440,1182]],
            C: [['ROGER MILLS',1253,55],['CUSTER',1405,70],['BECKHAM',1255,195],['WASHITA',1407,188],['GREER',1282,306],['KIOWA',1410,313],['HARMON',1220,370],['JACKSON',1315,421],['TILLMAN',1415,469],['TILLMAN',1435,537]],
            D: [['OKMULGEE',528,68],['MUSKOGEE',668,85],['SEQUOYAH',794,120],['CANADIAN',85,103],['OKLAHOMA',230,100],['OKFUSKEE',450,129],['CLEVELAND',230,216],['SEMINOLE',385,229],['HASKELL',713,209],['HUGHES',465,268],['GRADY',106,279],['MCCLAIN',204,282],['LATIMER',685,326],['LE FLORE',805,318],['GARVIN',232,383],['PONTOTOC',369,375],['COAL',450,422],['STEPHENS',114,452],['ATOKA',520,463],['PUSHMATAHA',675,452],['MCCURTAIN',794,481],['CARTER',222,488],['JOHNSTON',374,483],['ATOKA',500,540],['JOHNSTON',377,541],['CARTER',245,553],['JEFFERSON',118,580],['MARSHALL',351,608],['CHOCTAW',653,608],['MCCURTAIN',789,609],['BRYAN',463,628],['LOVE',247,633]]
        };
        const cities = [
            ['A','Trinidad',198,733,11],['B','Hutchinson',97,473,11],['B','Wichita',227,553,11],['B','Lebanon',1253,558,11],['B','Bartlesville',525,877,11],['B','Joplin',845,813,11],
            ['B','Springfield',1113,765,11],['B','Springdale',930,1068,11],['B','Fayetteville',925,1110,11],['B','Enid',108,997,11],['B','Broken',566,1160,11],['D','Arrow',565,6,11],
            ['C','Amarillo',783,197,11],['C','Roswell',193,797,11],['C','Lubbock',779,785,11],['C','Lawton',1550,397,11],
            ['D','Oklahoma',187,160,14.500],['D','City',205,210,14.500],['D','Fort Smith',867,137,11],['D','Little Rock',1335,351,11],['D','Sherman',387,717,11],['D','Texarkana',950,781,11],
            ['D','Denton',272,900,11],['D','Plano',368,921,11],['D','Lewisville',302,957,11],['D','Dallas',345,993,13],['D','Fort Worth',228,1054,11],['D','Mesquite',388,1047,11]
        ];

        let m = '';
        const poly = (q, s, attrs, amp = 0) => `<polyline points="${pl(q, s, amp)}" ${attrs}/>`;
        lakes.forEach(l => m += poly(l[0], l[1], `fill="none" stroke="${LAKE}" stroke-width="1.700" stroke-linejoin="round" stroke-opacity=".85"`, 1.400));
        parks.forEach(p => m += poly(p[0], p[1] + ' ' + p[1].split(' ')[0], `fill="#e4eadd" stroke="${PARK}" stroke-width="1.600"`, .7));
        m += poly('B', '1085,1180 1100,1125 1160,1140 1210,1170 1280,1115 1305,1095', `fill="none" stroke="${PARK}" stroke-width="1.800"`, .8);
        m += poly('A', '270,650 305,600 395,592 365,650 325,695 285,690 270,650', 'fill="#f9cdcb" stroke="#f59d9c" stroke-width="1.600"');
        ['285,680 330,612', '305,688 360,610', '325,680 385,600'].forEach(s => m += poly('A', s, 'fill="none" stroke="#f59d9c" stroke-width="1"'));

        const dashed = 'fill="none" stroke="#e0b8e2" stroke-width="1" stroke-dasharray="4 3"';
        [['A','738,393 738,810'],['A','45,815 525,815'],['A','518,985 518,1200'],['C','518,0 518,485 515,1040'],['B','825,393 825,790'],['B','830,985 1443,985'],['D','950,860 950,1052'],['D','950,940 1443,945'],['D','855,740 900,765 950,760']]
            .forEach(d => m += poly(d[0], d[1], dashed));

        roads.forEach(r => m += poly(r[2], r[3], `fill="none" stroke="${r[0]}" stroke-width="${r[1]}" stroke-linejoin="round"`, .8));
        counties.forEach(c => m += poly(c[0], c[1], `fill="none" stroke="${COUNTY}" stroke-width="2.200" stroke-linejoin="round"`, c[2] || 0));

        cities.forEach(c => {
            const [x, y] = P(c[0], c[2], c[3]);
            m += `<text x="${x}" y="${y + c[4] * .36}" text-anchor="middle" font-size="${c[4]}" fill="#333" stroke="#f2efe9" stroke-width="2" paint-order="stroke">${c[1]}</text>`;
        });
        const [ax, ay] = P('D', 1322, 318);
        m += `<text x="${ax}" y="${ay + 4}" text-anchor="middle" font-size="11" font-style="italic" fill="#8a6aa8">Arkansas</text>`;

        Object.keys(names).forEach(q => names[q].forEach(n => {
            const [x, y] = P(q, n[1], n[2]);
            m += `<text x="${x}" y="${y + 2.600}" text-anchor="middle" font-size="7.300" font-weight="bold" fill="#8b8b00" stroke="#fff" stroke-opacity=".85" stroke-width="3" paint-order="stroke">${n[0]}</text>`;
        }));

        // earthquakes
        const reds = [[182,182],[270,215],[260,190],[215,210],[340,275],[320,280],[268,300],[365,332],[445,403],[570,435],[590,432],[760,437],[750,250],[530,75],[555,88],[400,90],[490,150],[572,530],[378,527],[460,637],[492,715],[682,297],[580,295],[580,405],[650,190],[490,255],[290,160],[350,185]];
        const blacks = [[135,210],[185,240],[560,500]];
        const z = ([x, y]) => [1190 + x / 3, 255 + y / 3];
        blacks.forEach(b => {
            const [x, y] = z(b);
            m += `<circle cx="${x - .6}" cy="${y + 1}" r="6" fill="#111"/><circle cx="${x}" cy="${y}" r="5.500" fill="#d9474d"/>`;
        });
        reds.forEach(b => { const [x, y] = z(b); m += `<circle cx="${x}" cy="${y}" r="5.500" fill="#d9474d"/>`; });
        [[470,418],[477,428],[501,402]].forEach(b => { const [x, y] = P('D', b[0], b[1]); m += `<circle cx="${x}" cy="${y}" r="5.500" fill="#d9474d"/>`; });

        // wells: fixed seed, rejected against the cluster outline
        const outline = [[40,45],[750,45],[750,120],[660,110],[670,180],[710,190],[690,230],[770,240],[850,295],[905,350],[860,400],[830,440],[770,500],[640,530],[520,460],[410,420],[400,330],[450,300],[380,230],[230,220],[150,170],[90,120],[40,90]];
        const inside = (x, y) => {
            let c = false;
            for (let i = 0, j = outline.length - 1; i < outline.length; j = i++) {
                const [xi, yi] = outline[i], [xj, yj] = outline[j];
                if ((yi > y) !== (yj > y) && x < (xj - xi) * (y - yi) / (yj - yi) + xi) c = !c;
            }
            return c;
        };
        const wellDots = [[42,147],[125,243],[180,250],[289,250],[350,290],[377,292],[420,310],[490,490],[525,510],[500,552],[540,570],[545,590],[690,563],[780,540],[818,460],[838,645],[785,637],[67,50],[60,72],[540,555],[548,580]];
        let guard = 0;
        while (wellDots.length < 640 && guard++ < 40000) {
            const x = 40 + rnd() * 880, y = 40 + rnd() * 500;
            if (inside(x, y)) wellDots.push([x, y]);
        }
        for (let i = 0; i < 40; i++) wellDots.push([735 + rnd() * 130, 575 + rnd() * 55]);
        wellDots.forEach(b => {
            const [x, y] = z(b);
            m += `<circle cx="${x}" cy="${y}" r="5.500" fill="#4f94d8" stroke="#4586c8" stroke-width=".4"/>`;
        });
        document.getElementById('map').innerHTML = m;
    </script>
</body>
</html>
